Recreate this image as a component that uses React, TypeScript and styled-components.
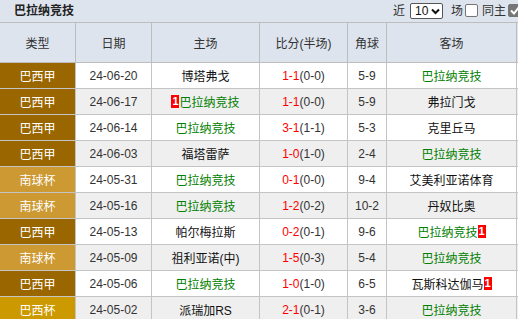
import React from 'react';
import styled, { createGlobalStyle } from 'styled-components';

const Global = createGlobalStyle`
  html, body { margin: 0; padding: 0; background: #dde4ee; }
  body {
    font-family: "Liberation Sans", "Noto Sans CJK SC", sans-serif;
    font-size: 12px;
    color: #222;
  }
`;

const Page = styled.div`
  width: 518px;
  height: 319px;
  overflow: hidden;
  background: #dde4ee;
`;

const TopBar = styled.div`
  display: flex;
  align-items: center;
  justify-content: space-between;
  height: 22px;
  padding-left: 14px;
  box-sizing: border-box;
`;

const Title = styled.div`
  font-weight: bold;
  font-size: 12px;
  line-height: 22px;
  color: #222;
`;

const Controls = styled.div`
  display: flex;
  align-items: center;
  margin-right: -3px;
  font-size: 12px;
  color: #333;
  line-height: 14px;
`;

const Label = styled.span<{ $ml?: number }>`
  margin-left: ${(p) => p.$ml ?? 0}px;
`;

const SelectBox = styled.div`
  display: flex;
  align-items: center;
  justify-content: space-between;
  width: 33px;
  height: 16px;
  box-sizing: border-box;
  margin-left: 5px;
  padding: 0 2px 0 4px;
  background: #fff;
  border: 1px solid #555;
  border-radius: 2px;
  font-size: 12px;
  color: #111;
`;

const Check = styled.span<{ $checked?: boolean; $ml?: number }>`
  display: inline-flex;
  align-items: center;
  justify-content: center;
  width: 13px;
  height: 13px;
  box-sizing: border-box;
  margin-left: ${(p) => p.$ml ?? 0}px;
  margin-top: -2px;
  border-radius: 2px;
  background: ${(p) => (p.$checked ? '#767676' : '#fff')};
  border: 1px solid #767676;
`;

const Grid = styled.div`
  display: flex;
  flex-direction: column;
`;

const COLS = '76px 76px 108px 88px 39px 130px';

const HeadRow = styled.div`
  display: grid;
  grid-template-columns: ${COLS};
  height: 41px;
  box-sizing: border-box;
  border-top: 1px solid #bdbdbd;
  border-bottom: 1px solid #bdbdbd;
`;

const HeadCell = styled.div`
  display: flex;
  align-items: center;
  justify-content: center;
  border-right: 1px solid #bdbdbd;
  color: #333;
  font-size: 12px;
`;

const Row = styled.div<{ $alt: boolean }>`
  display: grid;
  grid-template-columns: ${COLS};
  height: 26px;
  box-sizing: border-box;
  border-bottom: 1px solid #c4c4c4;
  background: ${(p) => (p.$alt ? '#efefef' : '#ffffff')};
`;

const Cell = styled.div`
  display: flex;
  align-items: center;
  justify-content: center;
  border-right: 1px solid #c4c4c4;
  white-space: nowrap;
  color: #333;
  font-size: 12px;
`;

const TypeCell = styled(Cell)<{ $bg: string }>`
  background: ${(p) => p.$bg};
  color: #fff;
`;

const Team = styled.span<{ $green?: boolean }>`
  display: inline-flex;
  align-items: center;
  color: ${(p) => (p.$green ? '#008000' : '#111')};
`;

const Badge = styled.span`
  display: inline-flex;
  align-items: center;
  justify-content: center;
  width: 8px;
  height: 13px;
  background: #ff0000;
  color: #fff;
  font-weight: bold;
  font-size: 11px;
  line-height: 13px;
`;

const ScoreFull = styled.span`
  color: #ff0000;
`;

const ScoreHalf = styled.span`
  color: #333;
`;

const typeColors: Record<string, string> = {
  巴西甲: '#996600',
  南球杯: '#cc9933',
  巴西杯: '#cc9900',
};

type Side = { name: string; green?: boolean; badge?: 'before' | 'after' };

const rows: {
  type: string;
  date: string;
  home: Side;
  full: string;
  half: string;
  corner: string;
  away: Side;
}[] = [
  { type: '巴西甲', date: '24-06-20', home: { name: '博塔弗戈' }, full: '1-1', half: '(0-0)', corner: '5-9', away: { name: '巴拉纳竞技', green: true } },
  { type: '巴西甲', date: '24-06-17', home: { name: '巴拉纳竞技', green: true, badge: 'before' }, full: '1-1', half: '(0-0)', corner: '5-9', away: { name: '弗拉门戈' } },
  { type: '巴西甲', date: '24-06-14', home: { name: '巴拉纳竞技', green: true }, full: '3-1', half: '(1-1)', corner: '5-3', away: { name: '克里丘马' } },
  { type: '巴西甲', date: '24-06-03', home: { name: '福塔雷萨' }, full: '1-0', half: '(1-0)', corner: '2-4', away: { name: '巴拉纳竞技', green: true } },
  { type: '南球杯', date: '24-05-31', home: { name: '巴拉纳竞技', green: true }, full: '0-1', half: '(0-0)', corner: '9-4', away: { name: '艾美利亚诺体育' } },
  { type: '南球杯', date: '24-05-16', home: { name: '巴拉纳竞技', green: true }, full: '1-2', half: '(0-2)', corner: '10-2', away: { name: '丹奴比奥' } },
  { type: '巴西甲', date: '24-05-13', home: { name: '帕尔梅拉斯' }, full: '0-2', half: '(0-1)', corner: '9-6', away: { name: '巴拉纳竞技', green: true, badge: 'after' } },
  { type: '南球杯', date: '24-05-09', home: { name: '祖利亚诺(中)' }, full: '1-5', half: '(0-3)', corner: '5-4', away: { name: '巴拉纳竞技', green: true } },
  { type: '巴西甲', date: '24-05-06', home: { name: '巴拉纳竞技', green: true }, full: '1-0', half: '(1-0)', corner: '6-5', away: { name: '瓦斯科达伽马', badge: 'after' } },
  { type: '巴西杯', date: '24-05-02', home: { name: '派瑞加RS' }, full: '2-1', half: '(0-1)', corner: '3-6', away: { name: '巴拉纳竞技', green: true } },
];

const TeamName: React.FC<{ side: Side }> = ({ side }) => (
  <Team $green={side.green}>
    {side.badge === 'before' && <Badge>1</Badge>}
    {side.name}
    {side.badge === 'after' && <Badge>1</Badge>}
  </Team>
);

const Chevron = () => (
  <svg width="9" height="7" viewBox="0 0 9 7">
    <path d="M1 1.5 L4.5 5 L8 1.5" fill="none" stroke="#111" strokeWidth="2" />
  </svg>
);

const Tick = () => (
  <svg width="10" height="9" viewBox="0 0 10 9">
    <path d="M1 4.5 L4 7.5 L9 1" fill="none" stroke="#fff" strokeWidth="2" />
  </svg>
);

export default function App() {
  return (
    <Page>
      <Global />
      <TopBar>
        <Title>巴拉纳竞技</Title>
        <Controls>
          <Label>近</Label>
          <SelectBox>
            <span>10</span>
            <Chevron />
          </SelectBox>
          <Label $ml={8}>场</Label>
          <Check $ml={2} />
          <Label $ml={4}>同主</Label>
          <Check $ml={2} $checked>
            <Tick />
          </Check>
        </Controls>
      </TopBar>
      <Grid>
        <HeadRow>
          <HeadCell>类型</HeadCell>
          <HeadCell>日期</HeadCell>
          <HeadCell>主场</HeadCell>
          <HeadCell>比分(半场)</HeadCell>
          <HeadCell>角球</HeadCell>
          <HeadCell>客场</HeadCell>
        </HeadRow>
        {rows.map((r, i) => (
          <Row key={i} $alt={i % 2 === 1}>
            <TypeCell $bg={typeColors[r.type]}>{r.type}</TypeCell>
            <Cell>{r.date}</Cell>
            <Cell>
              <TeamName side={r.home} />
            </Cell>
            <Cell>
              <ScoreFull>{r.full}</ScoreFull>
              <ScoreHalf>{r.half}</ScoreHalf>
            </Cell>
            <Cell>{r.corner}</Cell>
            <Cell>
              <TeamName side={r.away} />
            </Cell>
          </Row>
        ))}
      </Grid>
    </Page>
  );
}
